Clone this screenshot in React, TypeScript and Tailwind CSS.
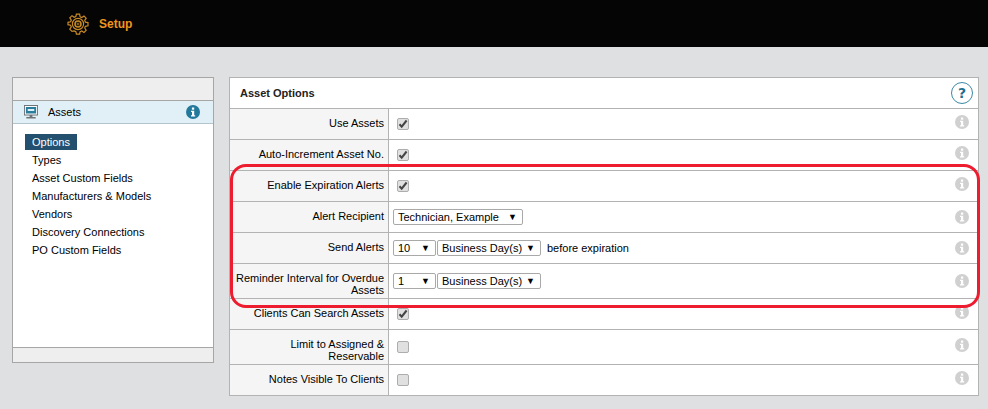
import React from 'react';

const menuItems = ['Options', 'Types', 'Asset Custom Fields', 'Manufacturers & Models', 'Vendors', 'Discovery Connections', 'PO Custom Fields'];

const GearIcon = () => (
  <svg width="22" height="22" viewBox="0 0 22 22" fill="none" stroke="#c98a24">
    <path
      strokeWidth="1.2"
      d="M9.4 1.2h3.2l.5 2.6 1.7.7 2.2-1.5 2.2 2.2-1.5 2.2.7 1.7 2.6.5v3.2l-2.6.5-.7 1.7 1.5 2.2-2.2 2.2-2.2-1.5-1.7.7-.5 2.6H9.4l-.5-2.6-1.7-.7L5 18.3l-2.2-2.2 1.5-2.2-.7-1.7L1 11.7V9.3l2.6-.5.7-1.7-1.5-2.2L5 2.7l2.2 1.5 1.7-.7z"
    />
    <circle cx="11" cy="11" r="5.6" strokeWidth="1.2" />
    <circle cx="11" cy="11" r="3" strokeWidth="1.6" />
    <circle cx="11" cy="11" r="1" strokeWidth="0.8" />
  </svg>
);

const MonitorIcon = () => (
  <svg width="14" height="14" viewBox="0 0 15 14" preserveAspectRatio="none">
    <rect x="0.5" y="0.5" width="14" height="9.5" fill="#fff" stroke="#6f7478" />
    <rect x="2" y="2" width="11" height="6.5" fill="#2a7d9c" />
    <rect x="4" y="4" width="7" height="2" fill="#dff0f6" />
    <rect x="6" y="10" width="3" height="2" fill="#6f7478" />
    <rect x="2.5" y="12" width="10" height="1.5" fill="#6f7478" />
  </svg>
);

const InfoIcon = ({ color, size }: { color: string; size: number }) => (
  <svg width={size} height={size} viewBox="0 0 14 14">
    <circle cx="7" cy="7" r="7" fill={color} />
    <rect x="5.9" y="2.5" width="2.3" height="2.2" fill="#fff" />
    <path d="M5 5.8h3.2v4.4h1v1.3H5v-1.3h1V7.1H5z" fill="#fff" />
  </svg>
);

const CheckBox = ({ checked }: { checked: boolean }) => (
  <div className="ml-[4px] flex h-[12px] w-[12px] items-center justify-center rounded-[2px] border border-[#adadad] bg-[#e0e0e0]">
    {checked && (
      <svg width="10" height="10" viewBox="0 0 10 10">
        <path d="M1.5 5.2l2.2 2.4L8.6 1.5" fill="none" stroke="#444" strokeWidth="2" />
      </svg>
    )}
  </div>
);

const Dropdown = ({ label, width }: { label: string; width: string }) => (
  <div className={`flex h-[16px] items-center justify-between rounded-[2px] border border-[#a9a9a9] bg-white pl-[4px] pr-[5px] text-[11px] text-black ${width}`}>
    <span className="whitespace-nowrap">{label}</span>
    <span className="text-[9px] leading-none">▼</span>
  </div>
);

const Row = ({ label, height, raised, children }: { label: string; height: string; raised?: boolean; children: React.ReactNode }) => (
  <div className={`flex border-t border-[#b3b3b3] ${height}`}>
    <div className="w-[159px] shrink-0 border-r border-[#b3b3b3] bg-[#f5f5f5] pl-[5px] pr-[4px] pt-[8px] text-right text-[11px] leading-[12px] text-black">
      {label}
    </div>
    <div className="flex flex-1 items-center bg-white pl-[4px] pr-[9px]">
      <div className="flex flex-1 items-center gap-[1px]">{children}</div>
      <div className={raised ? 'pb-[4px]' : ''}>
        <InfoIcon color="#d0d0d0" size={14} />
      </div>
    </div>
  </div>
);

export default function App() {
  return (
    <div className="relative h-[409px] w-[988px] overflow-hidden bg-[#dfe0e2] font-['Liberation_Sans',Arial,sans-serif]">
      <div className="flex h-[47px] items-center bg-[#050505] pl-[67px]">
        <GearIcon />
        <span className="ml-[10px] text-[12px] font-bold text-[#f0951e]">Setup</span>
      </div>

      <div className="flex items-start gap-[15px] pl-[12px] pt-[30px]">
        <div className="flex h-[286px] w-[202px] flex-col border border-[#a6a6a6] bg-white">
          <div className="h-[23px] border-b border-[#a6a6a6] bg-[#eeeeee]" />
          <div className="flex h-[23px] items-center border-b border-[#b4c4cc] bg-[#e1f0f6] pl-[11px] pr-[13px]">
            <MonitorIcon />
            <span className="ml-[10px] flex-1 text-[11px] text-black">Assets</span>
            <InfoIcon color="#23799b" size={14} />
          </div>
          <div className="flex flex-1 flex-col items-start pl-[12px] pt-[10px]">
            {menuItems.map((item, index) => (
              <div
                key={item}
                className={`flex items-center px-[7px] text-[11px] ${
                  index === 0 ? 'mb-[1px] h-[16px] bg-[#23506e] text-white' : 'h-[18px] text-black'
                }`}
              >
                {item}
              </div>
            ))}
          </div>
          <div className="h-[15px] border-t border-[#a6a6a6] bg-[#eeeeee]" />
        </div>

        <div className="w-[750px] border border-[#b3b3b3] bg-white">
          <div className="flex h-[30px] items-center justify-between pl-[10px] pr-[5px]">
            <span className="text-[11px] font-bold text-[#222]">Asset Options</span>
            <div className="flex h-[22px] w-[22px] items-center justify-center rounded-full border-[1.5px] border-[#3d89a6] font-['DejaVu_Sans',sans-serif] text-[14px] font-bold text-[#1f6f8f]">
              ?
            </div>
          </div>
          <Row label="Use Assets" height="h-[31px]" raised><CheckBox checked /></Row>
          <Row label="Auto-Increment Asset No." height="h-[31px]" raised><CheckBox checked /></Row>
          <Row label="Enable Expiration Alerts" height="h-[31px]" raised><CheckBox checked /></Row>
          <Row label="Alert Recipient" height="h-[31px]"><Dropdown label="Technician, Example" width="w-[130px]" /></Row>
          <Row label="Send Alerts" height="h-[31px]">
            <Dropdown label="10" width="w-[43px]" />
            <Dropdown label="Business Day(s)" width="w-[104px]" />
            <span className="ml-[5px] text-[11px] text-black">before expiration</span>
          </Row>
          <Row label="Reminder Interval for Overdue Assets" height="h-[35px]">
            <Dropdown label="1" width="w-[43px]" />
            <Dropdown label="Business Day(s)" width="w-[104px]" />
          </Row>
          <Row label="Clients Can Search Assets" height="h-[31px]" raised><CheckBox checked /></Row>
          <Row label="Limit to Assigned & Reservable" height="h-[35px]" raised><CheckBox checked={false} /></Row>
          <Row label="Notes Visible To Clients" height="h-[31px]" raised><CheckBox checked={false} /></Row>
        </div>
      </div>

      {/* red annotation drawn over the form */}
      <div className="absolute left-[230px] top-[164px] h-[144px] w-[750px] rounded-[16px] border-[3px] border-[#ed1c2e]" />
    </div>
  );
}
